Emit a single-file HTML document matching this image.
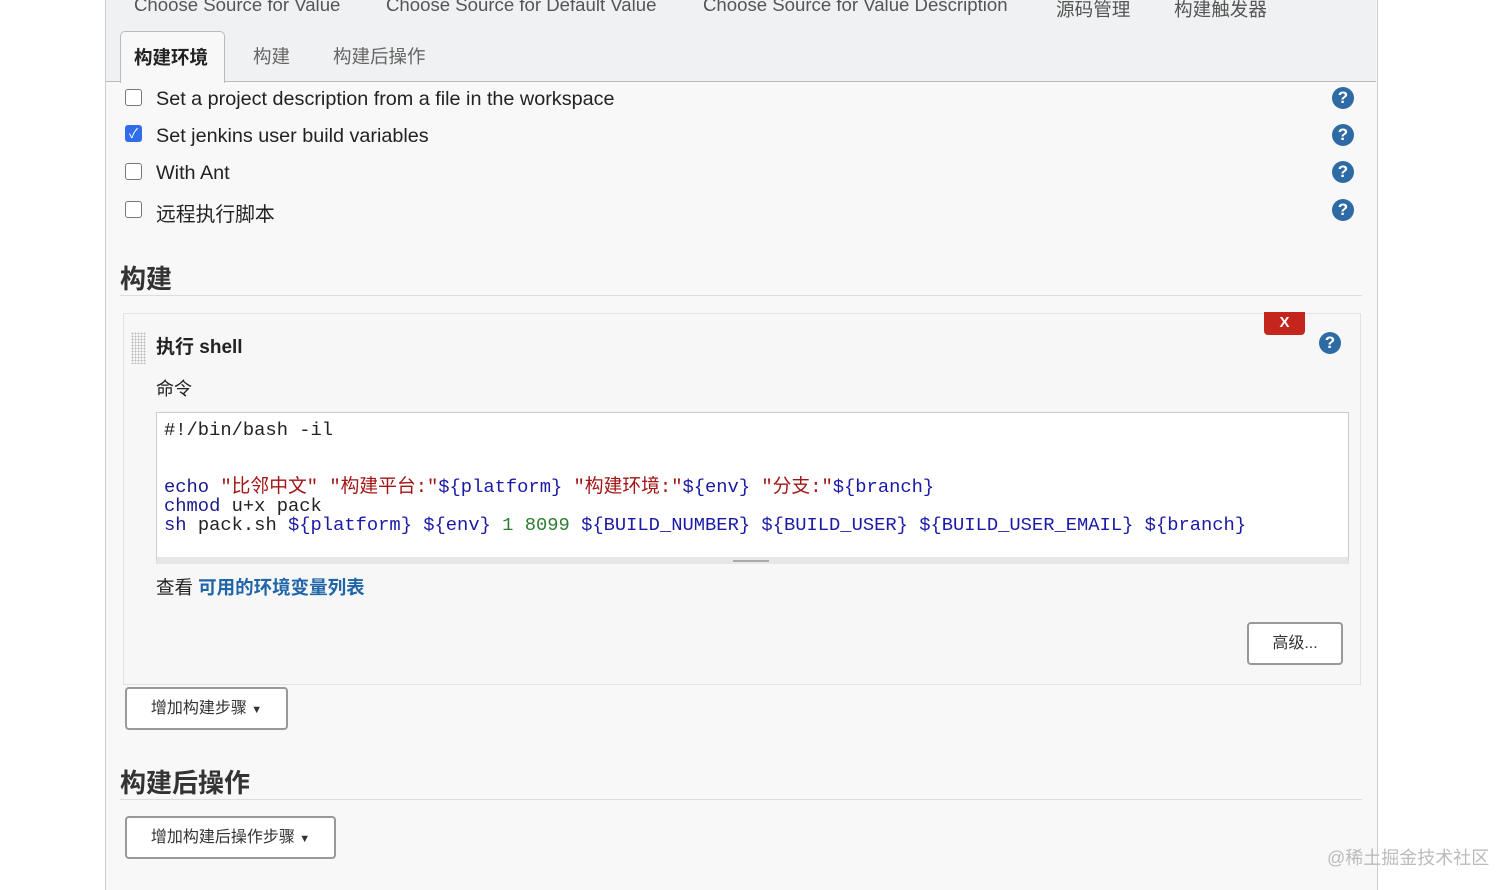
<!DOCTYPE html>
<html><head><meta charset="utf-8"><style>
body{margin:0;width:1512px;height:890px;background:#fff;position:relative;overflow:hidden;font-family:"Liberation Sans","Noto Sans CJK SC",sans-serif;color:#333}
.a{position:absolute}
.main{left:105px;top:0;width:1271px;height:890px;background:#f8f8f8;border-left:1px solid #ccc;border-right:1px solid #ccc}
.tabbar{left:106px;top:0;width:1270px;height:81px;background:#f0f1f2;border-bottom:1px solid #bbb}
.toptxt{top:-6px;font-size:18.6px;color:#555}
.cb{width:15px;height:15px;border:1px solid #777;border-radius:3px;background:#fff}
.lbl{font-size:19.8px;color:#222}
.help{width:22px;height:22px;border-radius:50%;background:#2e6ba4;color:#fff;font-weight:bold;font-size:17px;text-align:center;line-height:22px}
.h{font-size:26px;font-weight:bold;color:#333}
.hr{height:1px;background:#ddd}
.btn{border:2px solid #999;border-radius:4px;background:#fff;font-size:16px;color:#333;text-align:center;box-sizing:border-box}
.code{font-family:"Liberation Mono","Noto Sans CJK SC",monospace;font-size:18.8px;line-height:19px;white-space:pre;color:#222}
.k{color:#1a1a8a}.s{color:#a31515}.v{color:#1a1aa6}.n{color:#2e7d32}
</style></head><body>
<div class="a main"></div>
<div class="a tabbar"></div>
<div class="a toptxt" style="left:134px">Choose Source for Value</div>
<div class="a toptxt" style="left:386px">Choose Source for Default Value</div>
<div class="a toptxt" style="left:703px">Choose Source for Value Description</div>
<div class="a toptxt" style="left:1056px;top:-5px">源码管理</div>
<div class="a toptxt" style="left:1174px;top:-5px">构建触发器</div>
<div class="a" style="left:120px;top:31px;width:103px;height:51px;background:#f8f8f8;border:1px solid #bbb;border-bottom:none;border-radius:5px 5px 0 0"></div>
<div class="a" style="left:134px;top:44px;font-size:18.5px;font-weight:bold;color:#222">构建环境</div>
<div class="a" style="left:253px;top:43px;font-size:18.5px;color:#666">构建</div>
<div class="a" style="left:333px;top:43px;font-size:18.5px;color:#666">构建后操作</div>

<div class="a cb" style="left:125px;top:89px"></div>
<div class="a lbl" style="left:156px;top:88px">Set a project description from a file in the workspace</div>
<div class="a cb" style="left:125px;top:125px;background:#2f6ee8;border-color:#2f6ee8;color:#fff;font-size:13px;line-height:15px;text-align:center">✓</div>
<div class="a lbl" style="left:156px;top:125px">Set jenkins user build variables</div>
<div class="a cb" style="left:125px;top:163px"></div>
<div class="a lbl" style="left:156px;top:162px">With Ant</div>
<div class="a cb" style="left:125px;top:201px"></div>
<div class="a lbl" style="left:156px;top:198px">远程执行脚本</div>
<div class="a help" style="left:1332px;top:87px">?</div>
<div class="a help" style="left:1332px;top:124px">?</div>
<div class="a help" style="left:1332px;top:161px">?</div>
<div class="a help" style="left:1332px;top:199px">?</div>

<div class="a h" style="left:120px;top:259px">构建</div>
<div class="a hr" style="left:120px;top:295px;width:1242px"></div>

<div class="a" style="left:123px;top:313px;width:1236px;height:370px;border:1px solid #e2e2e2;background:#f7f7f7"></div>
<div class="a" style="left:131px;top:332px;width:15px;height:32px;background-image:radial-gradient(#bbb 0.8px,transparent 1px);background-size:3px 3px"></div>
<div class="a" style="left:1264px;top:312px;width:41px;height:23px;background:#c4261d;border-radius:0 0 4px 4px;color:#fff;font-weight:bold;font-size:15px;text-align:center;line-height:21px">X</div>
<div class="a help" style="left:1319px;top:332px">?</div>
<div class="a" style="left:156px;top:332px;font-size:19px;font-weight:bold;color:#222">执行 shell</div>
<div class="a" style="left:156px;top:375px;font-size:18px;color:#222">命令</div>
<div class="a" style="left:156px;top:412px;width:1193px;height:152px;background:#fff;border:1px solid #ccc;border-bottom:7px solid #e6e6e6;box-sizing:border-box"></div>
<div class="a" style="left:733px;top:560px;width:36px;height:2px;background:#aaa"></div>
<div class="a code" style="left:164px;top:421px">#!/bin/bash -il


<span class="k">echo</span> <span class="s">"比邻中文"</span> <span class="s">"构建平台:"</span><span class="v">${platform}</span> <span class="s">"构建环境:"</span><span class="v">${env}</span> <span class="s">"分支:"</span><span class="v">${branch}</span>
<span class="k">chmod</span> u+x pack
<span class="k">sh</span> pack.sh <span class="v">${platform}</span> <span class="v">${env}</span> <span class="n">1 8099</span> <span class="v">${BUILD_NUMBER}</span> <span class="v">${BUILD_USER}</span> <span class="v">${BUILD_USER_EMAIL}</span> <span class="v">${branch}</span></div>
<div class="a" style="left:156px;top:574px;font-size:18.5px;color:#222">查看 <span style="color:#1f65a8;font-weight:bold">可用的环境变量列表</span></div>
<div class="a btn" style="left:1247px;top:622px;width:96px;height:43px;line-height:39px">高级...</div>

<div class="a btn" style="left:125px;top:687px;width:163px;height:43px;line-height:39px">增加构建步骤 <span style="font-size:11px">▼</span></div>
<div class="a h" style="left:120px;top:763px">构建后操作</div>
<div class="a hr" style="left:120px;top:799px;width:1242px"></div>
<div class="a btn" style="left:125px;top:816px;width:211px;height:43px;line-height:39px">增加构建后操作步骤 <span style="font-size:11px">▼</span></div>
<div class="a" style="left:1327px;top:844px;font-size:18px;color:#bbb">@稀土掘金技术社区</div>
</body></html>
